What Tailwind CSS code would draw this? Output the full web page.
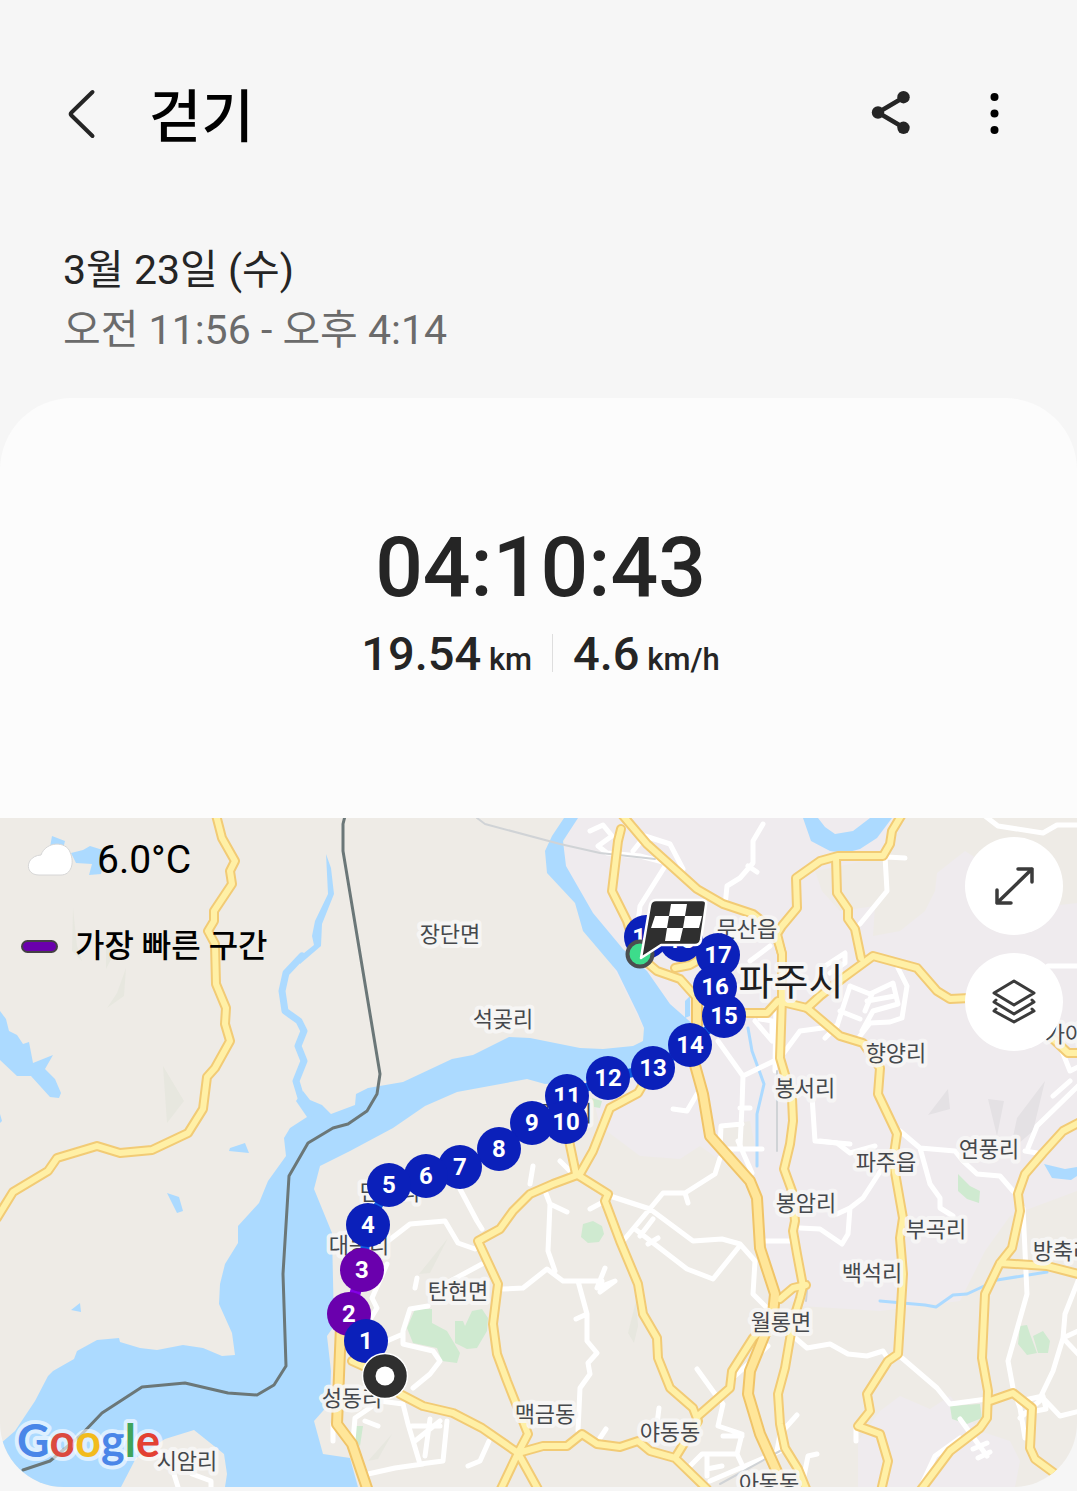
<!DOCTYPE html>
<html lang="ko">
<head>
<meta charset="utf-8">
<meta name="viewport" content="width=device-width, initial-scale=1">
<title>걷기</title>
<script src="https://cdn.jsdelivr.net/npm/@tailwindcss/browser@4"></script>
</head>
<body class="min-h-screen bg-[#f6f6f6] text-[#252525] font-[Roboto,'Noto_Sans_CJK_KR',sans-serif]">
<header class="flex items-center pt-[72px] pl-[52px] pr-[52px]">
  <button type="button" aria-label="뒤로" class="flex h-[84px] w-[60px] items-center justify-center">
    <svg class="h-[60px] w-[60px]" viewBox="52 84 60 60" fill="none" stroke="#252525" stroke-width="4" stroke-linecap="round" stroke-linejoin="round"><path d="M92.500 92L71.500 112.500Q70 114 71.500 115.500L92.500 136"/></svg>
  </button>
  <h1 class="ml-[37px] flex-1 pt-2 text-[57px] leading-[76px] font-medium text-black">걷기</h1>
  <button type="button" aria-label="공유" class="flex h-[84px] w-[62px] items-center justify-center">
    <svg class="h-[60px] w-[60px]" viewBox="860 84 60 60" fill="#252525"><path d="M903.500 97.500L878 112.500L903.500 127.500" fill="none" stroke="#252525" stroke-width="4.500"/><circle cx="878" cy="112.500" r="6.200"/><circle cx="903.500" cy="97.200" r="6.200"/><circle cx="903.500" cy="127.800" r="6.200"/></svg>
  </button>
  <button type="button" aria-label="더보기" class="ml-[42px] flex h-[84px] w-[62px] items-center justify-center">
    <svg class="h-[60px] w-[60px]" viewBox="964 84 60 60"><circle cx="994.500" cy="97" r="4"/><circle cx="994.500" cy="113.500" r="4"/><circle cx="994.500" cy="130" r="4"/></svg>
  </button>
</header>
<main>
  <section class="px-[63px] pt-[84px] pb-[38px] text-[41px] leading-[60px]">
    <p>3월 23일 (수)</p>
    <p class="text-[#6b6b6b]">오전 11:56 - 오후 4:14</p>
  </section>
  <section class="rounded-t-[72px] bg-[#fcfcfc] pt-[120px] pb-[134px] pl-1 text-center font-medium">
    <p class="text-[84px] leading-[100px]">04:10:43</p>
    <div class="flex items-center justify-center pt-1">
      <p class="pt-2 text-[47px] leading-[48px]">19.54 <span class="-ml-1 text-[31px]">km</span></p>
      <span class="mx-5 h-[38px] w-px bg-[#dedede]"></span>
      <p class="pt-2 text-[47px] leading-[48px]">4.6 <span class="-ml-1 text-[31px]">km/h</span></p>
    </div>
  </section>

  <section class="relative overflow-hidden rounded-b-[64px]" aria-label="운동 경로">
    <svg class="block h-auto w-full" viewBox="0 817 1077 669" fill="none" stroke-linejoin="round" stroke-linecap="round">
      <defs>
        <g id="roads">
          <path d="M215 810L222 837L235 860L230 870L232 883L214 910V920L208 930L215 943L216 983L226 1007L225 1023L230 1040L215 1067L207 1076L203 1108L188 1132L152 1149L120 1152L97 1145L57 1157L48 1170L13 1191L-3 1217"/>
          <path d="M619 810L647 843L677 870L697 888L723 903L753 913L775 930L782 953"/>
          <path d="M904 810L892 830L890 843L883 855H838L820 860L796 877L797 907L782 925L777 933L782 953V997L780 1057L792 1097L793 1120L790 1143L784 1168L792 1190L795 1220L793 1230L797 1253L803 1285L800 1297L793 1320L785 1367L778 1393L780 1423L785 1447L798 1468L807 1490"/>
          <path d="M621 828L618 840L612 890L627 920L637 953L657 970L680 978L697 997"/>
          <path d="M675 967L690 964L697 960M740 1012H767L778 1000L807 1007L840 1035L863 1042L880 1067L878 1093L897 1133L893 1160L903 1217L900 1237L903 1273L898 1353L888 1360L867 1393L870 1410L858 1425L880 1433L888 1460L881 1490"/>
          <path d="M807 1007L820 995L843 977L873 955L917 967L937 990L950 998L990 996L1050 1035L1068 1052H1082M836 857L837 892L848 908V918L855 928L861 957"/>
          <path d="M1082 1120L1063 1130L1043 1152L1025 1173L1018 1193L1020 1210L1012 1247L1000 1262L985 1293L982 1357L988 1390L987 1417L980 1427L950 1450L920 1490M1000 1262L1047 1265L1082 1274M990 1400L1013 1392L1032 1407L1030 1447L1035 1458L1065 1480"/>
          <path d="M645 1080L638 1092L610 1107L593 1150L580 1173M567 1130L576 1173L608 1193L605 1200L620 1240L638 1283L643 1313L657 1337L658 1357L670 1387L693 1407L698 1420L675 1457L707 1488M675 1457L650 1450L638 1440L620 1446L597 1443L582 1433L567 1445H543L518 1452"/>
          <path d="M698 1415L730 1387L732 1370L753 1337L775 1315M780 1298L793 1287L806 1284"/>
          <path d="M580 1173L553 1183L530 1193L513 1210L500 1228L478 1240L498 1283L493 1323L497 1353L507 1380L528 1433L518 1452L500 1490M539 1490L518 1452L482 1427L453 1412L423 1405L400 1393L385 1375L352 1360"/>
        </g>
        <g id="highways">
          <path d="M697 997V1023L693 1057L703 1093L710 1135L750 1180L757 1197L760 1247L775 1293L773 1313L750 1370L748 1393L760 1433L778 1473L784 1490"/>
          <path d="M341 1325L337 1423L352 1443L368 1490"/>
        </g>
      </defs>
      <path fill="#eeebe6" d="M0 817H1077V1486H0Z"/>
      <g fill="#efebee">
        <path d="M570 817H1077V1190L1010 1215L985 1250L960 1300L880 1310L800 1305L770 1290L762 1240L750 1180L700 1145L680 1158L640 1155L600 1125L590 1085L660 1060L560 860Z"/>
        <path d="M880 1410L900 1395L930 1408L950 1395L980 1430L1010 1440L1020 1460L1015 1486H858V1440Z"/>
      </g>
      <path fill="#eeebe6" d="M893 817H1077V902L1050 905L965 850L937 872L935 890L925 910L900 930L873 935L875 905L840 910L822 890L815 870L885 856Z"/>
      <path fill="#eeebe6" d="M720 1125L750 1120L755 1145L725 1150Z"/>
      <g fill="#e4e1e4">
        <path d="M948 1088L950 1108L928 1114ZM988 1098L1004 1100L997 1135ZM1045 1080L1033 1130L1010 1150L1017 1117Z"/>
      </g>
      <g fill="#e7e7df">
        <path d="M126 967L124 995L107 1007L117 992ZM163 1065L184 1100L167 1122ZM73 907L77 945L82 960L72 950ZM106 938L118 945L106 968ZM448 1237L430 1272L419 1273ZM392 1433L378 1458L368 1460ZM636 1300L638 1325L634 1342L628 1332Z"/>
      </g>
      <g fill="#acdaff">
        <path d="M0 1010L6 1018L9 1030L17 1034L23 1043L29 1041L33 1062L53 1054L45 1068L55 1078L61 1092L59 1097L50 1096L31 1075H17L0 1059ZM0 1113L2 1120L0 1122Z"/>
        <path d="M52 835L65 840L63 848L50 846ZM71 852L83 849L90 845L106 850L101 873L89 874L92 863L76 862Z"/>
        <path d="M230 1147L245 1142L249 1152L229 1150ZM167 1192L179 1196L183 1210L177 1212ZM71 1309L80 1302L81 1311ZM1044 1163L1065 1168L1077 1166V1175L1071 1179L1052 1177ZM685 1000L690 995V1015L685 1017Z"/>
        <path d="M326 853L331 867L334 893L322 923L321 945L300 963L299 956L314 944L312 935L315 920L328 893Z"/>
        <path d="M803 817L811 840L830 850L845 852L860 848L877 837L892 817H870L853 830L835 833L825 826L818 817Z"/>
        <path d="M307 1116L290 1127L284 1137L286 1155L268 1180L259 1202L238 1225V1242L225 1263L220 1283L219 1303L232 1332L235 1354L222 1355L203 1347L183 1344L157 1349L140 1347L120 1341L119 1337L97 1339L77 1350L74 1358L53 1370L48 1375L35 1400L15 1430L0 1443V1486H121L136 1457L165 1438L194 1429L224 1453L227 1473L225 1486H358L350 1457L323 1453L314 1420L330 1402L331 1370L327 1335L334 1325L332 1232L314 1188L320 1165L350 1150L393 1127L425 1105L457 1091L527 1078L545 1083L585 1080L640 1070L680 1050L695 1025L670 1003L647 970L623 948L593 912L566 865L563 840L578 817H564L552 835L545 850L547 872L575 902L583 930L617 970L638 1013L644 1027L643 1040L633 1045L603 1048L580 1047L530 1037L509 1036L473 1054L452 1058L403 1081L368 1087L356 1093L355 1104L331 1113L322 1104L310 1099L303 1090L296 1100Z"/>
      </g>
      <path stroke="#acdaff" stroke-width="7" d="M302 955L286 972L282 990L285 1010L299 1020L304 1030L298 1045L304 1060L296 1080L302 1100L310 1112"/>
      <path stroke="#acdaff" stroke-width="3" d="M880 1300L925 1304L936 1306L953 1294L967 1293L997 1279L1047 1271M748 1027L752 1050L764 1083L757 1113V1165"/>
      <path fill="#cfead0" d="M407 1327L415 1308H432V1322L447 1330L460 1352L457 1362L442 1360L437 1347L413 1342ZM455 1320L463 1320L465 1325L472 1310L482 1308L488 1317L487 1330L477 1347L467 1348L455 1342ZM355 1425H363L360 1445L355 1440ZM583 1223L593 1220L602 1225L604 1233L599 1241L588 1242L581 1236ZM958 1173L970 1185L980 1190L979 1202L967 1198L958 1190ZM1020 1325L1027 1324L1030 1333L1037 1352L1027 1354L1018 1343ZM1033 1335L1043 1330L1050 1340L1048 1352H1038ZM950 1405L980 1403L982 1417L967 1423L952 1418ZM592 1097L602 1100L600 1107L594 1106Z"/>
      <g stroke="#fff" stroke-width="5">
        <path d="M590 830L603 824L612 835L598 845L607 852L640 855L667 862L640 905L637 930M633 850L645 835L670 843L683 868M763 823L753 840V862L740 877L727 885L725 905M748 865L757 871"/>
        <path d="M718 1040L743 1075L742 1105L740 1145M743 1075L780 1057L800 1030L837 1025M776 1000L775 1070M812 1095L815 1140L850 1143M720 1148L721 1125L742 1123M673 1108L687 1110L697 1093M755 1020L772 1040V1020L760 1018M750 960L770 945M740 1107H750"/>
        <path d="M885 855L887 890L860 923M887 856L905 857M985 815L998 825L1043 832L1057 824H1080M1048 965H1080M898 967L907 985L902 1017L890 1021L870 1022L860 1035M850 985L870 993L893 982L898 1003L873 1010L862 1030M850 985L837 1025L825 1037M840 1010L860 1018M867 1000L895 995M825 965L845 952V962L830 972M872 993L865 1010"/>
        <path d="M1060 1045L1070 1070L1080 1065M1080 1083L1037 1125L1028 1147M1053 1095L1070 1080M820 1140L837 1142L850 1152L875 1145M900 1130L920 1147L955 1150L963 1160L977 1173L1000 1175L1013 1190M920 1147L930 1183L940 1197V1207L953 1215"/>
        <path d="M1023 1207L1027 1293L1008 1360L1013 1387L1020 1407L1025 1437M1080 1275L1065 1313L1063 1337L1053 1370L1040 1397M1063 1337L1080 1329M1063 1337L1080 1355M1020 1417L1043 1397L1060 1415L1080 1410M1020 1400L1043 1395L1046 1408L1025 1412M887 1160L863 1197L850 1207L848 1233L842 1243L820 1228L800 1227M850 1207L837 1213"/>
        <path d="M793 1335L807 1347L830 1343L848 1353L867 1355L883 1350L888 1358M902 1357L937 1387L950 1403L987 1398M960 1418L987 1455M973 1448L987 1442M978 1457L990 1451M960 1437L935 1455L922 1483M856 1425V1440M1037 1152L1025 1150"/>
        <path d="M610 1195L650 1208L693 1240L722 1238L740 1243L755 1260L753 1293L767 1307M623 1240L663 1192H685L715 1173L720 1157M685 1192L688 1202M635 1228L687 1268L713 1278L738 1247M653 1218L640 1235M658 1237L648 1243M503 1288L523 1287L547 1268L563 1280H602M578 1280L587 1313V1340L597 1352L588 1362L590 1373L580 1387L578 1430M605 1267L597 1287L615 1280L600 1291M576 1318L587 1313"/>
        <path d="M697 1368L715 1393L723 1403L718 1425L742 1433L737 1453H702L687 1468M723 1435H742M737 1453L745 1470M707 1455V1475M707 1468L722 1465M817 1453L808 1455L804 1475M797 1414L780 1433L777 1450M763 1240H790M738 1140L752 1172M723 1148H762M659 1407L657 1423M606 1428L600 1437M768 1345L735 1375M710 1480L780 1450"/>
        <path d="M460 1188L477 1220L482 1228M388 1240L410 1223L445 1220L458 1242L475 1248M482 1263L445 1283M533 1165L530 1183M545 1190L550 1203L548 1250L555 1270M550 1203L567 1211M560 1160L570 1170M428 1305L410 1308L403 1330V1343L433 1350L440 1360L430 1373L413 1387M387 1263L372 1297L377 1307L371 1317M403 1333L380 1343M417 1277L415 1287M590 1208L605 1200"/>
        <path d="M353 1440L355 1417L380 1400L403 1403L408 1423L420 1463L443 1460L447 1420M368 1473L395 1467L423 1463M412 1425L440 1425M415 1440L440 1420M430 1418L425 1455M365 1420L378 1425M333 1423V1440M489 1440L480 1460L468 1465M173 1470L178 1486M192 1473L211 1480V1486"/>
      </g>
      <path stroke="#d0d3d6" stroke-width="2" d="M477 817L485 823L560 843L600 852L655 858M777 1070V1150M720 1483L780 1450M808 1280L806 1300"/>
      <path stroke="#6b7778" stroke-width="3" d="M345 815L343 823V850L380 1073L377 1093L367 1110L348 1123L333 1127L308 1142L289 1175L283 1273L286 1365L274 1384L257 1394L228 1392L185 1382L142 1386L102 1412L80 1435L50 1460L23 1469"/>
      <use href="#roads" stroke="#f2cb75" stroke-width="10"/>
      <use href="#highways" stroke="#f0c468" stroke-width="12"/>
      <use href="#roads" stroke="#fff0a6" stroke-width="6"/>
      <use href="#highways" stroke="#ffe699" stroke-width="8"/>

      <g class="font-['Noto_Sans_CJK_KR',sans-serif]" fill="#45484c" stroke="#f8f7f6" stroke-opacity=".9" stroke-width="8" paint-order="stroke" font-size="22" text-anchor="middle">
        <text x="450" y="941">장단면</text>
        <text x="503" y="1026">석곶리</text>
        <text x="747" y="936">문산읍</text>
        <text x="896" y="1060">향양리</text>
        <text x="805" y="1095">봉서리</text>
        <text x="886" y="1169">파주읍</text>
        <text x="989" y="1156">연풍리</text>
        <text x="806" y="1210">봉암리</text>
        <text x="936" y="1236">부곡리</text>
        <text x="1063" y="1258">방축리</text>
        <text x="872" y="1280">백석리</text>
        <text x="781" y="1329">월롱면</text>
        <text x="545" y="1421">맥금동</text>
        <text x="670" y="1439">야동동</text>
        <text x="769" y="1490">아동동</text>
        <text x="458" y="1298">탄현면</text>
        <text x="390" y="1199">만우리</text>
        <text x="359" y="1252">대동리</text>
        <text x="352" y="1405">성동리</text>
        <text x="187" y="1468">시암리</text>
        <text x="562" y="1120">금산리</text>
        <text x="1065" y="1041">가야</text>
        <text x="791" y="994" font-size="38" fill="#1d1d1f">파주시</text>
      </g>

      <path stroke="#0d5be0" stroke-width="9" d="M385 1375L366 1340L349 1313M362 1269L368 1224L389 1184L426 1175L460 1166L499 1148L532 1122L566 1121L567 1095L608 1077L653 1067L690 1044L724 1015L715 986L718 954L681 939L646 936"/>
      <path stroke="#8300e6" stroke-width="11" d="M349 1313L362 1269"/>
      <g id="markers" class="font-[Roboto,sans-serif]" fill="#fff" font-size="24" font-weight="700" text-anchor="middle"></g>

      <circle cx="385" cy="1375" r="22.500" fill="#2f2f2f" stroke="#fff" stroke-width="1.500"/>
      <circle cx="385" cy="1375" r="9.500" fill="#fff"/>
      <circle cx="640" cy="953" r="12.500" fill="#3ddc8b" stroke="#4b4e50" stroke-width="4"/>
      <path fill="#2f2f2f" stroke="#fff" stroke-width="2.500" d="M656 899H702Q707 899 706 904L701 939Q700 944 695 944H661L641 957L650 904Q651 899 656 899Z"/>
      <path fill="#fff" d="M671 903H687L685 915H669ZM655 915H669L667 927H651ZM685 915H702L699 927H683ZM667 927H683L680 940H665Z"/>
    </svg>

    <div class="absolute top-[18px] left-[26px] flex h-[48px] items-center">
      <svg class="h-[36px] w-[48px]" viewBox="26 841 48 36"><path fill="#fff" stroke="#d6d6d6" d="M39 874C24 874 25 855 41 854C46 840 66 840 70 851C75 862 71 874 61 874Z"/></svg>
      <p class="ml-[23px] text-[39px] leading-[48px] text-black">6.0°C</p>
    </div>
    <div class="absolute top-[104px] left-[21px] flex h-[48px] items-center">
      <span class="h-[13px] w-[37px] rounded-full border-2 border-[#454045] bg-[#6a00ad]"></span>
      <p class="ml-[17px] text-[32px] leading-[48px] font-medium text-black">가장 빠른 구간</p>
    </div>
    <div class="absolute top-[19px] right-[14px] flex flex-col gap-[18px]">
      <button type="button" aria-label="지도 확대" class="flex size-[98px] items-center justify-center rounded-full bg-white">
        <svg class="size-[48px]" viewBox="990 861 48 48" fill="none" stroke="#3b3b3b" stroke-width="3.500" stroke-linecap="round" stroke-linejoin="round"><path d="M997 902L1032 868M1018 868H1032V881M997 889V902H1011"/></svg>
      </button>
      <button type="button" aria-label="지도 유형" class="flex size-[98px] items-center justify-center rounded-full bg-white">
        <svg class="size-[48px]" viewBox="990 977 48 48" fill="none" stroke="#3b3b3b" stroke-width="3" stroke-linecap="round" stroke-linejoin="round"><path d="M1014 980L1034 992L1014 1004L994 992ZM996 999L994 1001L1014 1013L1034 1001L1032 999M996 1008L994 1010L1014 1021L1034 1010L1032 1008"/></svg>
      </button>
    </div>
    <svg class="absolute bottom-[13px] left-[12px] h-[60px] w-[160px]" viewBox="0 0 160 60" role="img" aria-label="Google">
      <text class="font-[Lato,sans-serif]" x="5" y="43" font-size="45" font-weight="700" stroke="#fff" stroke-opacity=".6" stroke-width="8" stroke-linejoin="round" paint-order="stroke"><tspan fill="#4a86e8">G</tspan><tspan fill="#db4a3f">o</tspan><tspan fill="#f2bb1d">o</tspan><tspan fill="#4a86e8">g</tspan><tspan fill="#3fa45b">l</tspan><tspan fill="#e34133">e</tspan></text>
    </svg>
  </section>
</main>
<script>
  // Kilometre markers, farthest first so that earlier ones lie on top
  const points = [[646,936],[681,939],[718,954],[715,986],[724,1015],[690,1044],[653,1067],[608,1077],[567,1095],[566,1121],[532,1122],[499,1148],[460,1166],[426,1175],[389,1184],[368,1224],[362,1269],[349,1313],[366,1340]];
  document.getElementById('markers').innerHTML = points.map(([x, y], i) => {
    const km = 19 - i;
    const color = km === 2 || km === 3 ? '#6a00ad' : '#0b20ba';
    return `<circle cx="${x}" cy="${y}" r="22" fill="${color}"/><text x="${x}" y="${y + 8}">${km}</text>`;
  }).join('');
</script>
</body>
</html>
